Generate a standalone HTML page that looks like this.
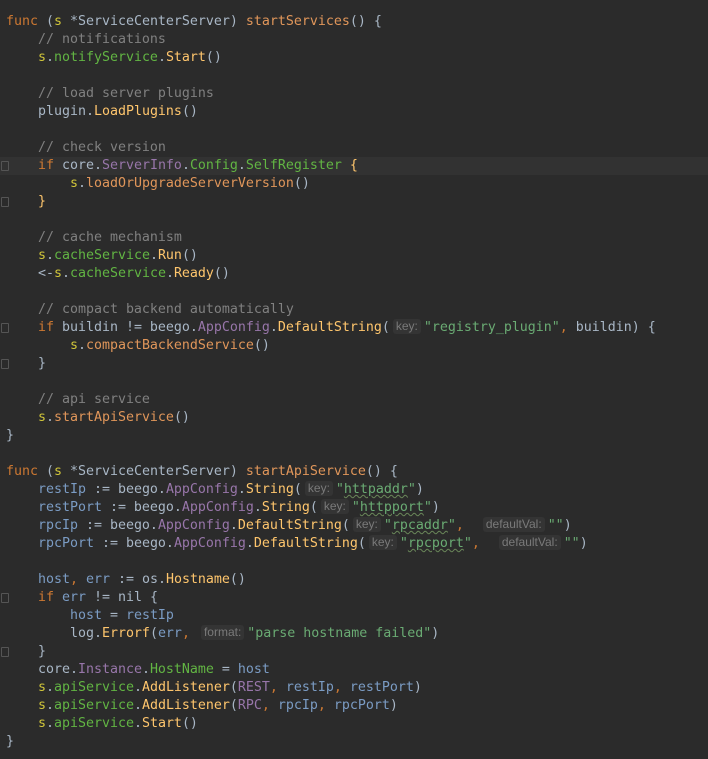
<!DOCTYPE html>
<html><head><meta charset="utf-8"><style>
body{margin:0;background:#2b2b2b;width:708px;height:759px;overflow:hidden}
.c{position:absolute;left:6px;top:13px;font-family:"DejaVu Sans Mono","Liberation Mono",monospace;font-size:13.29px;color:#a9b7c6}
.l{height:18px;line-height:18px;white-space:pre}
.hl{position:absolute;left:0;top:157px;width:708px;height:18px;background:#323232}
.k{color:#cc7832}.f{color:#e0965a}.y{color:#ffc66d}.g{color:#62b543}.s{color:#d0c53a}
.cm{color:#808080}.p{color:#9876aa}.v{color:#7b9cc4}.st{color:#6aab73}.o{color:#cc7832}
.h{display:inline-block;font-family:"Liberation Sans",sans-serif;font-size:12px;color:#7a7a7a;background:#343434;border-radius:3px;line-height:15px;padding:0 3px;margin:0 3px;vertical-align:1px}
.w{text-decoration:underline wavy #6a8759;text-decoration-thickness:1px}
.gut{position:absolute;left:1px;width:6px;height:8px;border:1px solid #555;border-radius:1px}
</style></head><body>
<div class="hl"></div>
<div class="gut" style="top:161px"></div><div class="gut" style="top:197px"></div>
<div class="gut" style="top:323px"></div><div class="gut" style="top:359px"></div>
<div class="gut" style="top:593px"></div><div class="gut" style="top:647px"></div>
<div class="c">
<div class="l"><span class="k">func</span> (<span class="s">s</span> *ServiceCenterServer) <span class="f">startServices</span>() {</div>
<div class="l">    <span class="cm">// notifications</span></div>
<div class="l">    <span class="s">s</span>.<span class="g">notifyService</span>.<span class="y">Start</span>()</div>
<div class="l"> </div>
<div class="l">    <span class="cm">// load server plugins</span></div>
<div class="l">    plugin.<span class="y">LoadPlugins</span>()</div>
<div class="l"> </div>
<div class="l">    <span class="cm">// check version</span></div>
<div class="l">    <span class="k">if</span> core.<span class="p">ServerInfo</span>.<span class="g">Config</span>.<span class="g">SelfRegister</span> <span class="y">{</span></div>
<div class="l">        <span class="s">s</span>.<span class="f">loadOrUpgradeServerVersion</span>()</div>
<div class="l">    <span class="y">}</span></div>
<div class="l"> </div>
<div class="l">    <span class="cm">// cache mechanism</span></div>
<div class="l">    <span class="s">s</span>.<span class="g">cacheService</span>.<span class="y">Run</span>()</div>
<div class="l">    &lt;-<span class="s">s</span>.<span class="g">cacheService</span>.<span class="y">Ready</span>()</div>
<div class="l"> </div>
<div class="l">    <span class="cm">// compact backend automatically</span></div>
<div class="l">    <span class="k">if</span> buildin != beego.<span class="p">AppConfig</span>.<span class="y">DefaultString</span>(<span class="h">key:</span><span class="st">"registry_plugin"</span><span class="o">,</span> buildin) {</div>
<div class="l">        <span class="s">s</span>.<span class="f">compactBackendService</span>()</div>
<div class="l">    }</div>
<div class="l"> </div>
<div class="l">    <span class="cm">// api service</span></div>
<div class="l">    <span class="s">s</span>.<span class="f">startApiService</span>()</div>
<div class="l">}</div>
<div class="l"> </div>
<div class="l"><span class="k">func</span> (<span class="s">s</span> *ServiceCenterServer) <span class="f">startApiService</span>() {</div>
<div class="l">    <span class="v">restIp</span> := beego.<span class="p">AppConfig</span>.<span class="y">String</span>(<span class="h">key:</span><span class="st">"<span class="w">httpaddr</span>"</span>)</div>
<div class="l">    <span class="v">restPort</span> := beego.<span class="p">AppConfig</span>.<span class="y">String</span>(<span class="h">key:</span><span class="st">"<span class="w">httpport</span>"</span>)</div>
<div class="l">    <span class="v">rpcIp</span> := beego.<span class="p">AppConfig</span>.<span class="y">DefaultString</span>(<span class="h">key:</span><span class="st">"<span class="w">rpcaddr</span>"</span><span class="o">,</span>  <span class="h">defaultVal:</span><span class="st">""</span>)</div>
<div class="l">    <span class="v">rpcPort</span> := beego.<span class="p">AppConfig</span>.<span class="y">DefaultString</span>(<span class="h">key:</span><span class="st">"<span class="w">rpcport</span>"</span><span class="o">,</span>  <span class="h">defaultVal:</span><span class="st">""</span>)</div>
<div class="l"> </div>
<div class="l">    <span class="v">host</span><span class="o">,</span> <span class="v">err</span> := os.<span class="y">Hostname</span>()</div>
<div class="l">    <span class="k">if</span> <span class="v">err</span> != nil {</div>
<div class="l">        <span class="v">host</span> = <span class="v">restIp</span></div>
<div class="l">        log.<span class="y">Errorf</span>(<span class="v">err</span><span class="o">,</span> <span class="h">format:</span><span class="st">"parse hostname failed"</span>)</div>
<div class="l">    }</div>
<div class="l">    core.<span class="p">Instance</span>.<span class="g">HostName</span> = <span class="v">host</span></div>
<div class="l">    <span class="s">s</span>.<span class="g">apiService</span>.<span class="y">AddListener</span>(<span class="p">REST</span><span class="o">,</span> <span class="v">restIp</span><span class="o">,</span> <span class="v">restPort</span>)</div>
<div class="l">    <span class="s">s</span>.<span class="g">apiService</span>.<span class="y">AddListener</span>(<span class="p">RPC</span><span class="o">,</span> <span class="v">rpcIp</span><span class="o">,</span> <span class="v">rpcPort</span>)</div>
<div class="l">    <span class="s">s</span>.<span class="g">apiService</span>.<span class="y">Start</span>()</div>
<div class="l">}</div>
</div>
</body></html>
